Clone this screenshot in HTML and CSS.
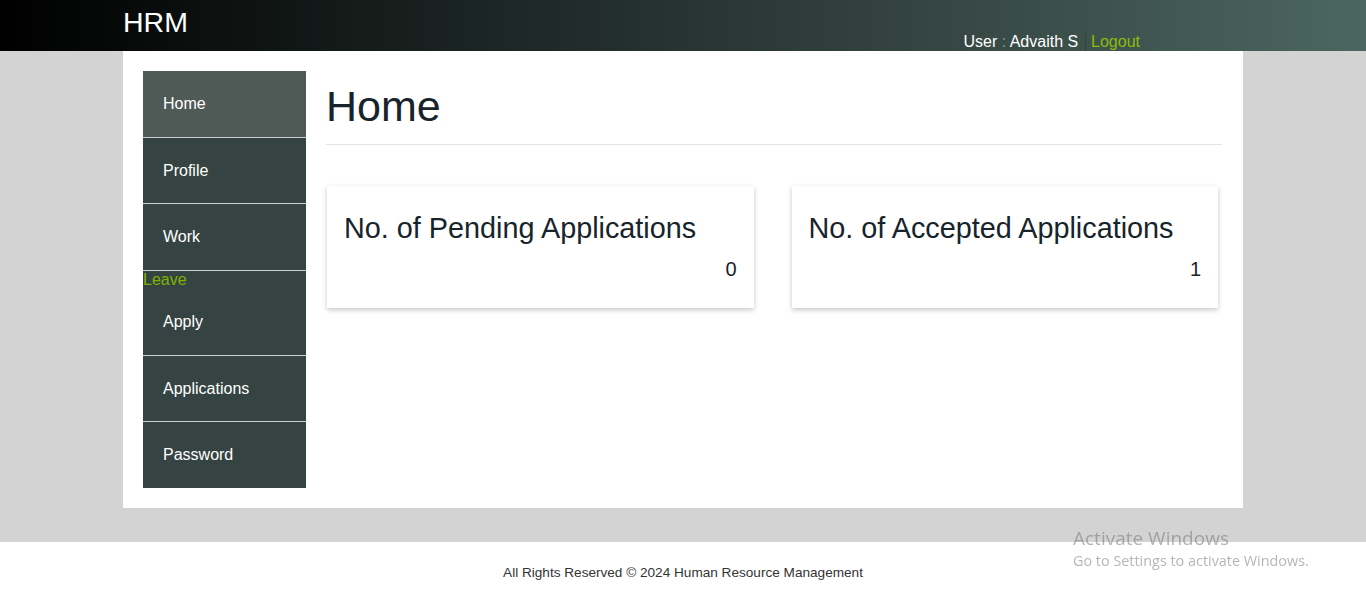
FILE: index.html
```html
<!DOCTYPE html>
<html lang="en">
<head>
<meta charset="utf-8">
<title>HRM - Home</title>
<link rel="stylesheet" href="styles.css">
</head>
<body>
<header class="topbar">
  <div class="topbar-inner">
    <div class="brand">HRM</div>
    <div class="userinfo">User <span class="colon">:</span> Advaith S <span class="bar"></span> <a class="logout" href="#">Logout</a></div>
  </div>
</header>
<div class="stage">
  <div class="panel">
    <nav class="sidenav">
      <a class="nav-item active" href="#">Home</a>
      <a class="nav-item" href="#">Profile</a>
      <a class="nav-item" href="#">Work</a>
      <div class="nav-group">
        <div class="nav-label">Leave</div>
        <a class="nav-item" href="#">Apply</a>
      </div>
      <a class="nav-item" href="#">Applications</a>
      <a class="nav-item" href="#">Password</a>
    </nav>
    <main class="main">
      <h1 class="page-title">Home</h1>
      <hr class="rule">
      <div class="cards">
        <div class="card">
          <h2 class="card-title">No. of Pending Applications</h2>
          <div class="card-count">0</div>
        </div>
        <div class="card">
          <h2 class="card-title">No. of Accepted Applications</h2>
          <div class="card-count">1</div>
        </div>
      </div>
    </main>
  </div>
</div>
<footer class="footer">All Rights Reserved © 2024 Human Resource Management</footer>
<div class="activate">
  <div class="act-title">Activate Windows</div>
  <div class="act-sub">Go to Settings to activate Windows.</div>
</div>
</body>
</html>
```

FILE: styles.css
```css
* { box-sizing: border-box; }
html, body { margin: 0; padding: 0; }
body {
  font-family: "Liberation Sans", Arial, sans-serif;
  background: #ffffff;
  color: #1c2a33;
}
.topbar {
  height: 51px;
  background: linear-gradient(90deg, #000000 0%, #1f2a28 40%, #33423f 65%, #4b6660 100%);
}
.topbar-inner {
  width: 1120px;
  margin: 0 auto;
  height: 51px;
  display: flex;
  align-items: flex-start;
}
.brand {
  color: #ffffff;
  font-size: 28.5px;
  line-height: 33px;
  padding-top: 6px;
}
.userinfo {
  margin-left: auto;
  margin-right: 103px;
  align-self: flex-end;
  color: #ffffff;
  font-size: 16px;
  line-height: 18px;
  white-space: nowrap;
}
.colon { color: #7f9a9c; }
.bar {
  display: inline-block;
  width: 1px;
  height: 18px;
  background: #33413f;
  margin: 0 1px 0 2px;
  vertical-align: -4px;
}
.logout {
  color: #8fbb0a;
  text-decoration: none;
}
.stage {
  background: #d3d3d3;
  padding-bottom: 34px;
}
.panel {
  width: 1120px;
  margin: 0 auto;
  background: #ffffff;
  padding: 20px 21px 20px 20px;
  display: flex;
  gap: 20px;
  align-items: flex-start;
}
.sidenav {
  width: 163px;
  flex: none;
  background: #354442;
  display: flex;
  flex-direction: column;
}
.nav-item {
  display: block;
  color: #ffffff;
  text-decoration: none;
  font-size: 16px;
  line-height: 17.6px;
  padding: 24px 20px;
  border-bottom: 1px solid #c9cfce;
}
.sidenav > .nav-item:last-child { border-bottom: none; }
.nav-item.active { background: #4f5956; }
.nav-label {
  color: #7fb200;
  font-size: 16px;
  line-height: 18.4px;
}
.main {
  flex: 1;
  min-width: 0;
}
.page-title {
  font-size: 43px;
  font-weight: normal;
  line-height: 48px;
  margin: 11px 0 0 0;
  color: #17242b;
}
.rule {
  border: none;
  border-top: 1px solid #e4e4e4;
  margin: 14px 0 0 0;
}
.cards {
  display: grid;
  grid-template-columns: 1fr 1fr;
  gap: 38px;
  margin: 41px 4px 0 1px;
}
.card {
  background: #ffffff;
  box-shadow: 0 2px 5px rgba(0, 0, 0, 0.22);
  padding: 26px 17px 28px 17px;
}
.card-title {
  font-size: 28.8px;
  font-weight: normal;
  line-height: 33px;
  margin: 0;
  color: #17242b;
}
.card-count {
  text-align: right;
  font-size: 20px;
  line-height: 21px;
  margin-top: 14px;
  color: #17242b;
}
.footer {
  text-align: center;
  font-size: 13.6px;
  color: #333333;
  padding-top: 23px;
  height: 62px;
}
.activate {
  position: fixed;
  left: 1073px;
  top: 526px;
  font-family: "Open Sans", "Noto Sans", sans-serif;
  color: rgba(120, 120, 120, 0.55);
  pointer-events: none;
}
.act-title { font-size: 19px; line-height: 24px; }
.act-sub { font-size: 14.4px; line-height: 21px; }
```
